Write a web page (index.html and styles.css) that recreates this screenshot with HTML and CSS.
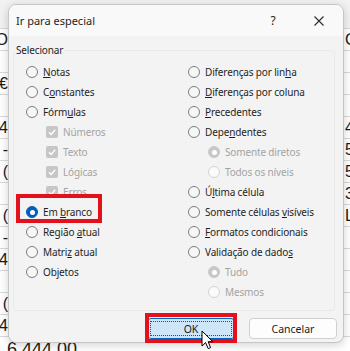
FILE: index.html
```html
<!DOCTYPE html>
<html lang="pt">
<head>
<meta charset="utf-8">
<title>Ir para especial</title>
<link rel="stylesheet" href="styles.css">
</head>
<body>
<div class="sheet">
  <div class="row head"><span class="l"></span><span class="r"></span></div>
  <div class="row"><span class="l">O</span><span class="r">C</span></div>
  <div class="row"><span class="l"></span><span class="r"></span></div>
  <div class="row"><span class="l">7€</span><span class="r"></span></div>
  <div class="row"><span class="l"></span><span class="r"></span></div>
  <div class="row"><span class="l">4</span><span class="r">4</span></div>
  <div class="row"><span class="l">-</span><span class="r">5</span></div>
  <div class="row"><span class="l">(</span><span class="r">5</span></div>
  <div class="row"><span class="l"></span><span class="r">3</span></div>
  <div class="row"><span class="l">(</span><span class="r">L</span></div>
  <div class="row"><span class="l">-</span><span class="r"></span></div>
  <div class="row"><span class="l">4</span><span class="r"></span></div>
  <div class="row"><span class="l"></span><span class="r"></span></div>
  <div class="row"><span class="l">(</span><span class="r"></span></div>
  <div class="row"><span class="l">4</span><span class="r"></span></div>
  <div class="row big"><span class="total">6 444,00</span></div>
</div>

<div class="dialog">
  <div class="titlebar">
    <span class="title">Ir para especial</span>
    <span class="help">?</span>
    <span class="close"><svg width="10" height="10" viewBox="0 0 10 10"><path d="M0.5 0.5 L9.5 9.5 M9.5 0.5 L0.5 9.5" stroke="#2b2b2b" stroke-width="1.1" fill="none"/></svg></span>
  </div>
  <div class="content">
    <fieldset class="group">
      <legend>Selecionar</legend>
      <div class="cols">
        <div class="col">
          <div class="opt"><span class="radio"></span><span><u>N</u>otas</span></div>
          <div class="opt"><span class="radio"></span><span>C<u>o</u>nstantes</span></div>
          <div class="opt"><span class="radio"></span><span>Fórm<u>u</u>las</span></div>
          <div class="opt sub dis"><span class="check"><svg width="10" height="10" viewBox="0 0 10 10"><path d="M2 5.2 L4.2 7.4 L8.2 2.8" stroke="#fff" stroke-width="1.4" fill="none"/></svg></span><span>Números</span></div>
          <div class="opt sub dis"><span class="check"><svg width="10" height="10" viewBox="0 0 10 10"><path d="M2 5.2 L4.2 7.4 L8.2 2.8" stroke="#fff" stroke-width="1.4" fill="none"/></svg></span><span>Texto</span></div>
          <div class="opt sub dis"><span class="check"><svg width="10" height="10" viewBox="0 0 10 10"><path d="M2 5.2 L4.2 7.4 L8.2 2.8" stroke="#fff" stroke-width="1.4" fill="none"/></svg></span><span>Lógicas</span></div>
          <div class="opt sub dis"><span class="check"><svg width="10" height="10" viewBox="0 0 10 10"><path d="M2 5.2 L4.2 7.4 L8.2 2.8" stroke="#fff" stroke-width="1.4" fill="none"/></svg></span><span>Erros</span></div>
          <div class="opt"><span class="radio on"></span><span>Em <u>b</u>ranco</span></div>
          <div class="opt"><span class="radio"></span><span>Região <u>a</u>tual</span></div>
          <div class="opt"><span class="radio"></span><span>Matri<u>z</u> atual</span></div>
          <div class="opt"><span class="radio"></span><span>Ob<u>j</u>etos</span></div>
        </div>
        <div class="col">
          <div class="opt"><span class="radio"></span><span>Diferenças por lin<u>h</u>a</span></div>
          <div class="opt"><span class="radio"></span><span><u>D</u>iferenças por coluna</span></div>
          <div class="opt"><span class="radio"></span><span><u>P</u>recedentes</span></div>
          <div class="opt"><span class="radio"></span><span>Depe<u>n</u>dentes</span></div>
          <div class="opt sub dis"><span class="radio on"></span><span>Somente diretos</span></div>
          <div class="opt sub dis"><span class="radio"></span><span>Todos os níveis</span></div>
          <div class="opt"><span class="radio"></span><span>Ú<u>l</u>tima célula</span></div>
          <div class="opt"><span class="radio"></span><span>Somente células <u>v</u>isíveis</span></div>
          <div class="opt"><span class="radio"></span><span><u>F</u>ormatos condicionais</span></div>
          <div class="opt"><span class="radio"></span><span>Validação de dado<u>s</u></span></div>
          <div class="opt sub dis"><span class="radio on"></span><span>Tudo</span></div>
          <div class="opt sub dis"><span class="radio"></span><span>Mesmos</span></div>
        </div>
      </div>
    </fieldset>
    <div class="buttons">
      <button class="btn primary">OK</button>
      <button class="btn">Cancelar</button>
    </div>
  </div>
</div>

<div class="mark mark-blank"></div>
<div class="mark mark-ok"></div>
<svg class="cursor" width="13" height="21" viewBox="0 0 13 21"><path d="M1 1 L1 16 L4.6 12.6 L7.2 18.6 L9.6 17.6 L7.1 11.7 L11.8 11.7 Z" fill="#fff" stroke="#000" stroke-width="1" stroke-linejoin="round"/></svg>
</body>
</html>
```

FILE: styles.css
```css
html, body {
  margin: 0;
  padding: 0;
}
body {
  width: 350px;
  height: 351px;
  overflow: hidden;
  background: #ffffff;
  position: relative;
}

/* spreadsheet behind */
.sheet {
  display: flex;
  flex-direction: column;
  font-family: "Liberation Sans", Arial, sans-serif;
  font-size: 16px;
  color: #1a1a1a;
}
.row {
  height: 22px;
  box-sizing: border-box;
  border-bottom: 1px solid #d9d9d9;
  display: flex;
  align-items: center;
  justify-content: space-between;
  flex: none;
}
.row.head {
  height: 29px;
  background: #f2f2f2;
}
.l {
  width: 8px;
  overflow: hidden;
  display: flex;
  justify-content: flex-end;
  white-space: nowrap;
}
.r {
  width: 5px;
  overflow: hidden;
  white-space: nowrap;
}
.row.big {
  justify-content: flex-start;
  font-size: 18px;
}
.total {
  padding-left: 7px;
  padding-top: 4px;
}

/* dialog */
.dialog {
  position: absolute;
  left: 8px;
  top: 4px;
  width: 336px;
  height: 339px;
  box-sizing: border-box;
  border: 1px solid #c6c6c6;
  border-radius: 8px;
  background: #f3f3f3;
  box-shadow: 0 2px 10px rgba(0, 0, 0, 0.18);
  display: flex;
  flex-direction: column;
  overflow: hidden;
  font-family: "Noto Sans", "Open Sans", sans-serif;
  color: #1f1f1f;
}
.titlebar {
  height: 31px;
  flex: none;
  display: flex;
  align-items: center;
  padding-left: 7px;
  background: #f9f9f9;
}
.title {
  flex: 1;
  font-size: 11px;
}
.help {
  width: 24px;
  text-align: center;
  font-size: 12px;
  margin-right: 14px;
}
.close {
  width: 40px;
  height: 31px;
  margin-right: 4px;
  display: flex;
  align-items: center;
  justify-content: center;
}
.content {
  flex: 1;
  display: flex;
  flex-direction: column;
  padding: 0 6px 3px 4px;
}
.group {
  margin: 7px 2px 0 0;
  padding: 5px 0 8px 0;
  border: 1px solid #e9e9e9;
  border-radius: 4px;
  min-width: 0;
}
.group legend {
  font-size: 10px;
  letter-spacing: -0.15px;
  line-height: 14px;
  padding: 0 1px;
  margin-left: 1px;
}
.cols {
  display: grid;
  grid-template-columns: 162px 1fr;
  padding-left: 12px;
}
.opt {
  height: 20px;
  display: flex;
  align-items: center;
  gap: 5px;
  font-size: 10px;
  letter-spacing: -0.15px;
  white-space: nowrap;
}
.opt.sub {
  padding-left: 20px;
}
.opt u {
  text-underline-offset: 1px;
}
.radio {
  width: 12px;
  height: 12px;
  box-sizing: border-box;
  border: 1px solid #7d7d7d;
  border-radius: 50%;
  background: #f7f7f7;
  flex: none;
  display: flex;
  align-items: center;
  justify-content: center;
}
.radio.on {
  background: #005fb8;
  border-color: #005fb8;
}
.radio.on::after {
  content: "";
  width: 5px;
  height: 5px;
  border-radius: 50%;
  background: #ffffff;
}
.dis {
  color: #a3a3a3;
}
.dis .radio {
  border-color: #d3d3d3;
  background: #fbfbfb;
}
.dis .radio.on {
  background: #c8c8c8;
  border-color: #c8c8c8;
}
.check {
  width: 12px;
  height: 12px;
  border-radius: 2px;
  background: #c6c6c6;
  flex: none;
  display: flex;
  align-items: center;
  justify-content: center;
}
.buttons {
  margin-top: auto;
  display: flex;
  justify-content: flex-end;
  gap: 14px;
}
.btn {
  width: 88px;
  height: 21px;
  box-sizing: border-box;
  border: 1px solid #d0d0d0;
  border-radius: 4px;
  background: #fdfdfd;
  font-family: "Noto Sans", "Open Sans", sans-serif;
  font-size: 10.5px;
  color: #1b1b1b;
  padding: 0;
}
.btn.primary {
  background: #cfe5f8;
  border-color: #0067c0;
  outline: 1px dotted #444;
  outline-offset: -4px;
}

/* annotations */
.mark {
  position: absolute;
  box-sizing: border-box;
  border: 4px solid #e3111b;
}
.mark-blank {
  left: 16px;
  top: 194px;
  width: 86px;
  height: 29px;
}
.mark-ok {
  left: 145px;
  top: 313px;
  width: 92px;
  height: 30px;
}
.cursor {
  position: absolute;
  left: 201px;
  top: 330px;
}
```
